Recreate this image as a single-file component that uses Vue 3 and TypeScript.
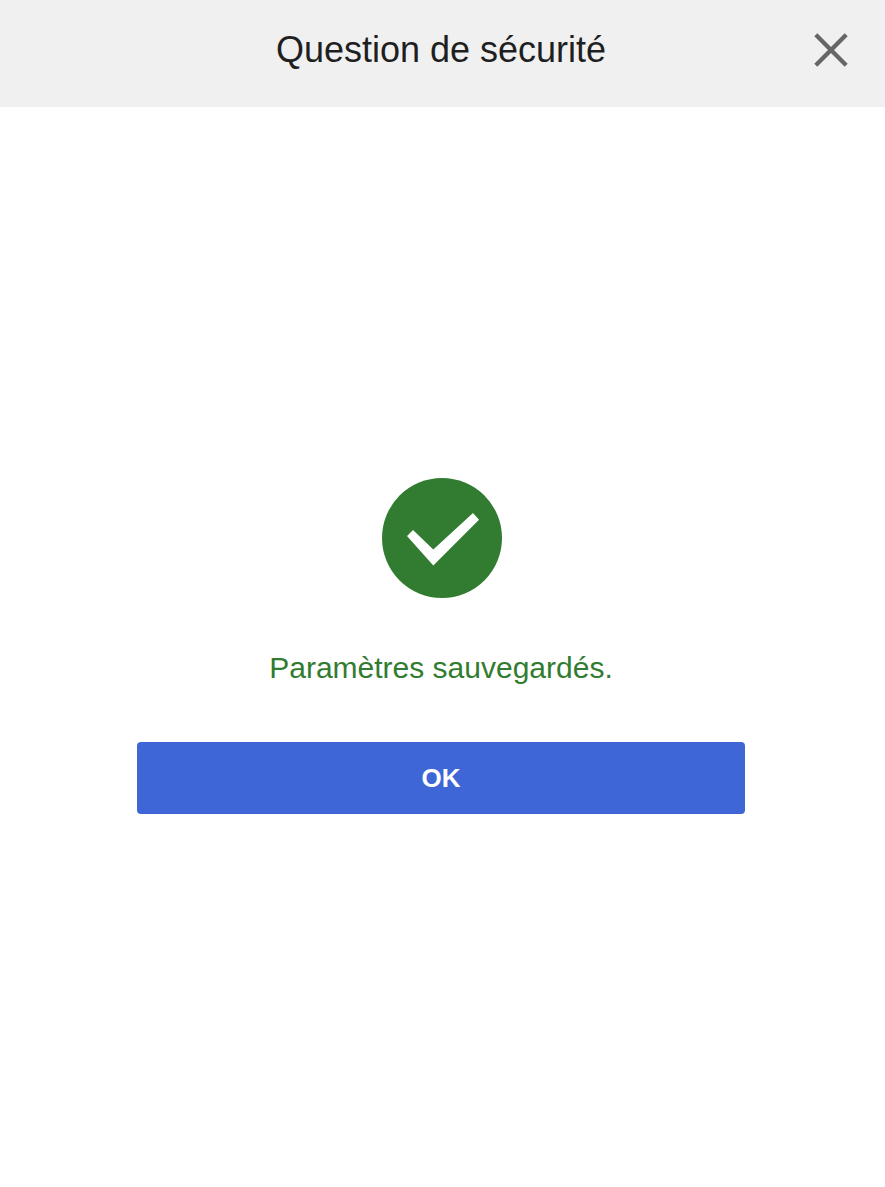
<script setup lang="ts">
const title: string = 'Question de sécurité'
const message: string = 'Paramètres sauvegardés.'
</script>

<template>
  <div class="page">
    <header class="header">
      <h1 class="title">{{ title }}</h1>
      <button class="close" type="button" aria-label="Fermer">
        <svg width="36" height="36" viewBox="0 0 36 36" fill="none">
          <path d="M2.8 2.8 L33.2 33.2 M33.2 2.8 L2.8 33.2" stroke="#666666" stroke-width="4.3" />
        </svg>
      </button>
    </header>
    <main class="content">
      <svg class="check" width="120" height="120" viewBox="0 0 120 120">
        <circle cx="60" cy="60" r="60" fill="#327c31" />
        <path d="M25 58 L31 52 L51.3 71.5 L91 35 L97 41.7 L51.3 87.5 Z" fill="#ffffff" />
      </svg>
      <p class="message">{{ message }}</p>
      <button class="ok" type="button">OK</button>
    </main>
  </div>
</template>

<style scoped>
.page {
  display: flex;
  flex-direction: column;
  height: 1187px;
  background: #ffffff;
  font-family: "Liberation Sans", Arial, sans-serif;
}
.header {
  position: relative;
  display: flex;
  align-items: center;
  justify-content: center;
  flex: 0 0 107px;
  padding: 0 3px 8px 0;
  box-sizing: border-box;
  background: #f0f0f0;
}
.title {
  margin: 0;
  font-size: 36px;
  font-weight: 400;
  color: #1f1f1f;
}
.close {
  position: absolute;
  top: 32px;
  right: 36px;
  width: 36px;
  height: 36px;
  padding: 0;
  border: 0;
  background: none;
  display: flex;
}
.content {
  flex: 1;
  display: flex;
  flex-direction: column;
  align-items: center;
  justify-content: center;
  padding: 0 3px 2px 0;
}
.check {
  display: block;
  margin-left: 1px;
}
.message {
  margin: 52px 0 0;
  font-size: 30px;
  line-height: 36px;
  color: #327c31;
}
.ok {
  margin-top: 56px;
  width: 608px;
  height: 72px;
  border: 0;
  border-radius: 4px;
  background: #3f66d6;
  color: #ffffff;
  font-family: inherit;
  font-size: 26px;
  font-weight: 700;
}
</style>
